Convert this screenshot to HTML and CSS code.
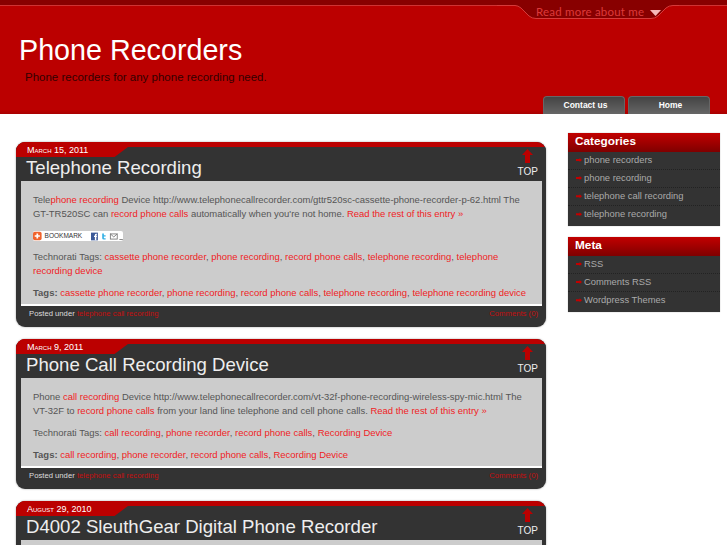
FILE: index.html
```html
<!DOCTYPE html>
<html lang="en">
<head>
<meta charset="utf-8">
<title>Phone Recorders</title>
<link rel="stylesheet" href="styles.css">
</head>
<body>
<header class="site-header">
  <div class="top-strip"></div>
  <div class="about-tab">
    <svg class="about-shape" width="182" height="20" viewBox="0 0 182 20"><path d="M0 5.500H18Q21 5.500 24 8L32 16Q35 18.500 39 18.500H154Q158 18.500 161 16L169 8Q172 5.500 176 5.500H182V0H0Z" fill="#880000"/><path d="M0 5.500H18Q21 5.500 24 8L32 16Q35 18.500 39 18.500H154Q158 18.500 161 16L169 8Q172 5.500 176 5.500H182" fill="none" stroke="#d63a3a" stroke-width="1"/></svg>
    <span class="about-text">Read more about me</span>
    <svg class="about-arrow" width="11" height="6" viewBox="0 0 11 6"><path d="M0 0H11L5.500 6Z" fill="#f6b9b9"/></svg>
  </div>
  <div class="brand">
    <h1 class="site-title">Phone Recorders</h1>
    <p class="site-desc">Phone recorders for any phone recording need.</p>
  </div>
  <nav class="nav">
    <a class="nav-tab">Contact us</a>
    <a class="nav-tab">Home</a>
  </nav>
</header>

<div class="page">
  <main class="posts">
    <article class="post">
      <div class="post-head">
        <div class="head-main">
          <div class="post-date">March 15, 2011</div>
          <h2 class="post-title">Telephone Recording</h2>
        </div>
        <a class="top-link">
          <svg width="11" height="14" viewBox="0 0 11 14"><path d="M5.500 0L11 6H8V14H3V6H0Z" fill="#bb0000"/></svg>
          <span>TOP</span>
        </a>
      </div>
      <div class="post-body">
        <p>Tele<a>phone recording</a> Device http://www.telephonecallrecorder.com/gttr520sc-cassette-phone-recorder-p-62.html The GT-TR520SC can <a>record phone calls</a> automatically when you're not home. <a>Read the rest of this entry »</a></p>
        <div class="bookmark">
          <svg width="10" height="10" viewBox="0 0 10 10"><rect width="10" height="10" rx="2" fill="#f0632c"/><path d="M5 2V8M2 5H8" stroke="#fff" stroke-width="2"/></svg>
          <span class="bookmark-text">BOOKMARK</span>
          <svg class="share" width="37" height="9" viewBox="0 0 37 9"><rect width="8" height="9" fill="#3b5998"/><path d="M4.500 9V5H3.500V3.500H4.500V2.500Q4.500 1.200 6 1.200H7V2.600H6.200V3.500H7L6.800 5H6.200V9Z" fill="#fff"/><path d="M13 1V6.500Q13 8 15 8H17V6.500H15V4.500H17V3H15V1Z" fill="#39b3e6"/><rect x="22.500" y="1.500" width="8" height="6" fill="#fff" stroke="#777"/><path d="M22.500 1.500L26.500 5L30.500 1.500" fill="none" stroke="#777"/><path d="M33 8H37" stroke="#777"/></svg>
        </div>
        <p>Technorati Tags: <a>cassette phone recorder</a>, <a>phone recording</a>, <a>record phone calls</a>, <a>telephone recording</a>, <a>telephone recording device</a></p>
        <p><b>Tags:</b> <a>cassette phone recorder</a>, <a>phone recording</a>, <a>record phone calls</a>, <a>telephone recording</a>, <a>telephone recording device</a></p>
      </div>
      <div class="post-foot"><span>Posted under <a>telephone call recording</a></span><a>Comments (0)</a></div>
    </article>

    <article class="post">
      <div class="post-head">
        <div class="head-main">
          <div class="post-date">March 9, 2011</div>
          <h2 class="post-title">Phone Call Recording Device</h2>
        </div>
        <a class="top-link">
          <svg width="11" height="14" viewBox="0 0 11 14"><path d="M5.500 0L11 6H8V14H3V6H0Z" fill="#bb0000"/></svg>
          <span>TOP</span>
        </a>
      </div>
      <div class="post-body">
        <p>Phone <a>call recording</a> Device http://www.telephonecallrecorder.com/vt-32f-phone-recording-wireless-spy-mic.html The VT-32F to <a>record phone calls</a> from your land line telephone and cell phone calls. <a>Read the rest of this entry »</a></p>
        <p>Technorati Tags: <a>call recording</a>, <a>phone recorder</a>, <a>record phone calls</a>, <a>Recording Device</a></p>
        <p><b>Tags:</b> <a>call recording</a>, <a>phone recorder</a>, <a>record phone calls</a>, <a>Recording Device</a></p>
      </div>
      <div class="post-foot"><span>Posted under <a>telephone call recording</a></span><a>Comments (0)</a></div>
    </article>

    <article class="post">
      <div class="post-head">
        <div class="head-main">
          <div class="post-date">August 29, 2010</div>
          <h2 class="post-title">D4002 SleuthGear Digital Phone Recorder</h2>
        </div>
        <a class="top-link">
          <svg width="11" height="14" viewBox="0 0 11 14"><path d="M5.500 0L11 6H8V14H3V6H0Z" fill="#bb0000"/></svg>
          <span>TOP</span>
        </a>
      </div>
      <div class="post-body post-body-empty"></div>
    </article>
  </main>

  <aside class="sidebar">
    <section class="widget">
      <h3 class="widget-title">Categories</h3>
      <ul class="widget-list">
        <li>phone recorders</li>
        <li>phone recording</li>
        <li>telephone call recording</li>
        <li>telephone recording</li>
      </ul>
    </section>
    <section class="widget">
      <h3 class="widget-title">Meta</h3>
      <ul class="widget-list">
        <li>RSS</li>
        <li>Comments RSS</li>
        <li>Wordpress Themes</li>
      </ul>
    </section>
  </aside>
</div>
</body>
</html>
```

FILE: styles.css
```css
* { box-sizing: border-box; }
html, body { height: 100%; }
body {
  margin: 0;
  background: #fff;
  font-family: "Liberation Sans", Arial, sans-serif;
  overflow: hidden;
}
h1, h2, h3, p, ul { margin: 0; padding: 0; }

.site-header {
  position: relative;
  height: 114px;
  background: linear-gradient(to bottom, #bb0000 0, #bb0000 110px, #a80000 114px);
  display: flex;
  flex-direction: column;
}
.top-strip {
  height: 6px;
  flex: none;
  background: #880000;
  border-bottom: 1px solid #cf3333;
}
.about-tab {
  position: absolute;
  top: 0;
  left: 497px;
  width: 182px;
  height: 20px;
}
.about-shape { position: absolute; left: 0; top: 0; }
.about-text {
  position: absolute;
  left: 39px;
  top: 5px;
  font: 11.500px/14px Lato, sans-serif;
  letter-spacing: 0.2px;
  color: #dd3a3a;
  white-space: nowrap;
}
.about-arrow { position: absolute; left: 153px; top: 10px; }

.brand { padding: 27px 0 0 19px; }
.site-title {
  font-size: 28.700px;
  line-height: 34px;
  font-weight: 400;
  color: #fff;
}
.site-desc {
  margin: 3px 0 0 6px;
  font-size: 11.500px;
  line-height: 14px;
  color: #330000;
}
.nav {
  margin-top: auto;
  align-self: flex-end;
  display: flex;
  gap: 3px;
  margin-right: 17px;
}
.nav-tab {
  width: 82px;
  height: 18px;
  padding-left: 3px;
  border-radius: 4px 4px 0 0;
  background: linear-gradient(to bottom, #444 0, #666 100%);
  border: 1px solid #666;
  border-bottom: 0;
  color: #fff;
  font-size: 8.500px;
  font-weight: 700;
  line-height: 17px;
  text-align: center;
}

.page {
  display: flex;
  align-items: flex-start;
  padding: 19px 7px 0 16px;
  gap: 22px;
}
.posts { width: 530px; flex: none; margin-top: 9px; }
.post {
  background: #333;
  border-radius: 9px;
  padding: 0 4px 0 5px;
  margin-bottom: 12px;
  box-shadow: 0 0 2px #999;
  overflow: hidden;
}
.post-head {
  display: flex;
  justify-content: space-between;
  height: 39px;
  margin: 0 -4px 0 -5px;
  padding-right: 8px;
  background: linear-gradient(to bottom, #bb0000 0, #bb0000 5px, #333 5px);
}
.post-date {
  width: 112px;
  height: 15px;
  padding: 1px 0 0 11px;
  background: #bb0000;
  clip-path: polygon(0 0, 100% 0, 100% 5px, 88% 100%, 0 100%);
  color: #fff;
  font-size: 9px;
  line-height: 15px;
  font-variant: small-caps;
}
.post-title {
  padding-left: 10px;
  font-size: 18.600px;
  line-height: 22px;
  font-weight: 400;
  color: #eee;
  white-space: nowrap;
}
.top-link {
  display: flex;
  flex-direction: column;
  align-items: center;
  gap: 3px;
  padding-top: 7px;
  color: #eee;
  font-size: 10px;
  line-height: 11px;
}
.post-body {
  background: #ccc;
  border-bottom: 2px solid #fff;
  padding: 12px 12px 4px 12px;
  font-size: 9.480px;
  line-height: 14px;
  color: #555;
}
.post-body-empty { height: 40px; }
.post-body p { margin-bottom: 8px; }
.post-body p:last-child { margin-bottom: 0; }
.post-body a { color: #f01c24; }
.post-body b { font-weight: 700; }
.bookmark {
  display: flex;
  align-items: center;
  gap: 3px;
  width: 90px;
  height: 10px;
  margin: 10px 0 9px;
  background: #fff;
  border-radius: 2px;
}
.bookmark-text {
  font-size: 6.500px;
  line-height: 10px;
  color: #333;
}
.share { margin-left: 6px; }
.post-foot {
  display: flex;
  justify-content: space-between;
  height: 21px;
  padding: 1px 4px 0 8px;
  font-size: 7.700px;
  line-height: 14px;
  color: #ddd;
}
.post-foot a { color: #c30f0f; }

.sidebar { width: 152px; flex: none; display: flex; flex-direction: column; gap: 11px; }
.widget { background: #333; box-shadow: 0 0 1px #aaa; padding-bottom: 1.600px; }
.widget-title {
  height: 19px;
  padding-left: 7px;
  background: linear-gradient(to bottom, #c20000 0, #7f0000 100%);
  color: #fff;
  font-size: 11.800px;
  line-height: 17px;
  font-weight: 700;
}
.widget-list { list-style: none; }
.widget-list li {
  position: relative;
  height: 18.100px;
  padding-left: 16px;
  border-bottom: 1px dotted #222;
  font-size: 9.400px;
  line-height: 16px;
  color: #aaa;
}
.widget-list li:last-child { border-bottom: 0; }
.widget-list li::before {
  content: "";
  position: absolute;
  left: 8px;
  top: 6px;
  width: 6px;
  height: 4px;
  background: #c40000;
  clip-path: polygon(0 25%, 60% 25%, 60% 0, 100% 50%, 60% 100%, 60% 75%, 0 75%);
}
```
